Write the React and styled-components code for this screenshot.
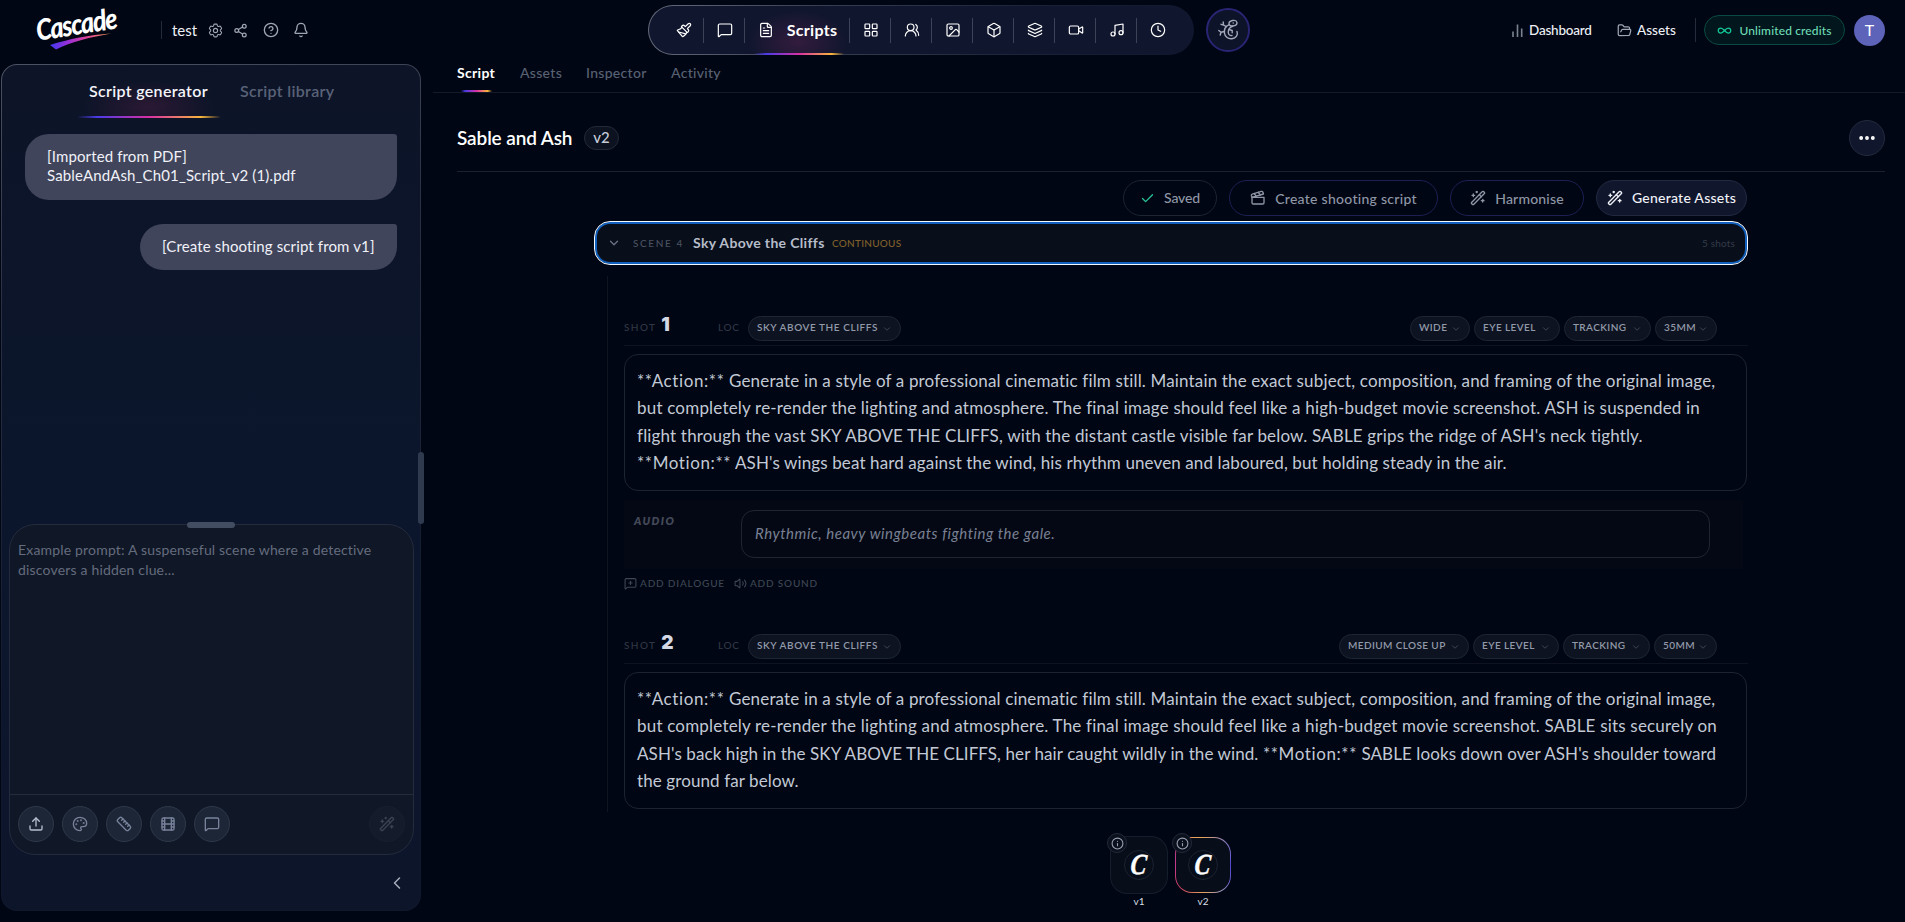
import styled, { createGlobalStyle, css } from "styled-components"
import {
	Bell, Box, Check, ChevronDown, ChevronLeft, CircleHelp, Clapperboard, Clock, Ellipsis, FileText, Film, FolderOpen,
	Image, Infinity as InfinityIcon, Info, Layers, LayoutGrid, MessageSquare, MessageSquarePlus, Music, Paintbrush,
	Palette, Ruler, Share2, Upload, UsersRound, Video, Volume2, WandSparkles
} from "lucide-react"
import { HiOutlineCog6Tooth } from "react-icons/hi2"

const GlobalStyle = createGlobalStyle`
	* { box-sizing: border-box; }
	body {
		margin: 0;
		background: #000613;
		color: #e8ebf4;
		font-family: Lato, "Open Sans", sans-serif;
		overflow: hidden;
	}
	svg { flex-shrink: 0; display: block; }
`

const rainbow = "linear-gradient(90deg, transparent, #4b3be8 14%, #d92fa5 50%, #f9b53c 86%, transparent)"

const Screen = styled.div`
	height: 922px;
	display: flex;
	flex-direction: column;
`

/* ---------- header ---------- */

const Header = styled.header`
	display: flex;
	align-items: center;
	height: 60px;
	margin-bottom: 4px;
`

const HeaderLeft = styled.div`
	display: flex;
	align-items: center;
	width: 648px;
	padding-left: 35px;
`

const Logo = styled.div`
	position: relative;
	width: 126px;
	height: 46px;
`

const LogoText = styled.div`
	width: 100px;
	font-size: 29px;
	line-height: 34px;
	font-weight: 900;
	font-style: italic;
	color: #fff;
	letter-spacing: -1.4px;
	transform-origin: left center;
	transform: translate(1px, 6px) rotate(-9deg) scaleX(.87);
`

const Swoosh = styled.svg`
	position: absolute;
	left: 14px;
	top: 25px;
`

const HeaderRule = styled.div`
	width: 1px;
	height: ${p => p.$h}px;
	background: #252b3b;
`

const ProjectName = styled.div`
	width: 35px;
	margin-left: 10px;
	padding-bottom: 1px;
	font-size: 15px;
	line-height: 20px;
	color: #eef0f6;
`

const HeaderIcons = styled.div`
	display: grid;
	grid-template-columns: 26px 30px 30px 16px;
	align-items: center;
	color: #a0a6b6;
`

const Nav = styled.nav`
	display: flex;
	align-items: center;
	width: 546px;
	height: 50px;
	padding-left: 14px;
	border: 1px solid transparent;
	border-radius: 25px;
	background:
		linear-gradient(#10162e, #10162e) padding-box,
		linear-gradient(100deg, #686d7d 0%, #3a4052 30%, #1b2139 70%, #10162e 100%) border-box;
`

const NavItem = styled.div`
	display: flex;
	align-items: center;
	justify-content: center;
	gap: 13px;
	position: relative;
	width: ${p => (p.$active ? 105 : 41)}px;
	height: 48px;
	color: #fff;
	font-size: 16px;
	font-weight: 700;
	letter-spacing: .3px;

	& span { padding-bottom: 2px; }

	&:not(:last-child)::before {
		content: "";
		position: absolute;
		right: 0;
		top: 12px;
		width: 1px;
		height: 25px;
		background: #3c4258;
	}

	${p => p.$active && css`
		background: radial-gradient(ellipse 50px 32px at 50% 75%, rgba(190, 50, 120, .2), transparent);
		&::after {
			content: "";
			position: absolute;
			left: 9px;
			right: 6px;
			bottom: -1px;
			height: 2px;
			background: ${rainbow};
		}
	`}
`

const MascotButton = styled.div`
	display: flex;
	align-items: center;
	justify-content: center;
	width: 44px;
	height: 44px;
	margin-left: 12px;
	border: 2px solid #2a2474;
	border-radius: 50%;
	background: #0d1328;
`

const HeaderRight = styled.div`
	display: flex;
	align-items: center;
	margin-left: auto;
	padding-right: 20px;
`

const HeaderLink = styled.div`
	display: flex;
	align-items: center;
	gap: ${p => p.$gap}px;
	width: ${p => p.$w}px;
	font-size: 13.5px;
	font-weight: 500;
	letter-spacing: ${p => p.$ls}px;
	color: #eef0f6;
	white-space: nowrap;
	& svg { color: #a0a6b6; }
`

const Credits = styled.div`
	display: flex;
	align-items: center;
	justify-content: center;
	gap: 7px;
	width: 141px;
	height: 30px;
	margin: 0 9px 0 8px;
	border: 1px solid #0b4a43;
	border-radius: 15px;
	background: #01161d;
	color: #6fdcb4;
	font-size: 12px;
	font-weight: 500;
	letter-spacing: .13px;
	& svg { color: #14c896; }
`

const Avatar = styled.div`
	width: 31px;
	height: 31px;
	border-radius: 50%;
	background: #5c63b8;
	font-size: 16px;
	line-height: 30px;
	text-align: center;
	color: #fff;
`

/* ---------- left panel ---------- */

const Body = styled.div`
	display: flex;
	flex: 1;
	min-height: 0;
`

const Sidebar = styled.aside`
	position: relative;
	display: flex;
	flex-direction: column;
	width: 420px;
	height: 847px;
	margin: 0 12px 0 1px;
	border: 1px solid transparent;
	border-radius: 16px;
	background:
		linear-gradient(#0d1428, #0b162c 50%, #0d152b) padding-box,
		linear-gradient(165deg, #4d5362 0%, #2b3142 25%, #10182c 70%) border-box;
`

const SideTabs = styled.div`
	display: flex;
	height: 69px;
	padding-left: 76px;
`

const SideTab = styled.div`
	width: 142px;
	height: 53px;
	padding: 14px 0 0 ${p => (p.$active ? 11 : 20)}px;
	border-bottom: 2px solid;
	border-image: ${p => (p.$active ? rainbow : "none")} 1;
	border-color: transparent;
	background: ${p => (p.$active ? "radial-gradient(ellipse 66px 26px at 50% 82%, rgba(150, 40, 90, .22), transparent)" : "none")};
	color: ${p => (p.$active ? "#f4f5fa" : "#596277")};
	font-size: 16px;
	line-height: 23px;
	font-weight: 600;
	letter-spacing: .32px;
	white-space: nowrap;
`

const Bubble = styled.div`
	align-self: flex-end;
	width: ${p => p.$w}px;
	margin: 0 23px 24px 0;
	padding: 13px 0 14px 22px;
	border-radius: 24px 3px 24px 24px;
	background: #40455b;
	color: #f0f1f8;
	font-size: 15px;
	line-height: 19.3px;
	letter-spacing: .13px;
	white-space: nowrap;
`

const PromptBox = styled.div`
	position: relative;
	display: flex;
	flex-direction: column;
	height: 331px;
	margin: auto 6px 55px 7px;
	border: 1px solid #232b3d;
	border-radius: 26px;
	background: #101726;
`

const ResizeHandle = styled.div`
	position: absolute;
	left: 177px;
	top: -3px;
	width: 48px;
	height: 6px;
	border-radius: 3px;
	background: #434d61;
`

const Placeholder = styled.div`
	flex: 1;
	padding: 15px 8px;
	color: #646c7e;
	font-size: 14px;
	line-height: 20px;
	letter-spacing: .18px;
`

const PromptTools = styled.div`
	display: flex;
	gap: 8px;
	height: 60px;
	padding: 11px 8px 0;
	border-top: 1px solid #252c3c;
`

const RoundTool = styled.div`
	display: flex;
	align-items: center;
	justify-content: center;
	width: 36px;
	height: 36px;
	border: 1px solid ${p => (p.$dim ? "#17202f" : "#2e3848")};
	border-radius: 50%;
	background: ${p => (p.$dim ? "#141c2b" : "#1c2637")};
	color: ${p => (p.$dim ? "#3b4353" : p.$bright ? "#b8bfce" : "#78829a")};
	margin-left: ${p => (p.$dim ? "auto" : 0)};
`

const Collapse = styled.div`
	position: absolute;
	right: 13px;
	bottom: 17px;
	color: #a7adbb;
`

const ScrollThumb = styled.div`
	position: absolute;
	right: -4px;
	top: 387px;
	width: 6px;
	height: 72px;
	border-radius: 3px;
	background: #2f3a4e;
`

/* ---------- main ---------- */

const Main = styled.main`
	flex: 1;
	min-width: 0;
`

const Tabs = styled.div`
	display: flex;
	height: 29px;
	padding-left: 24px;
	border-bottom: 1px solid #141a27;
`

const Tab = styled.div`
	position: relative;
	width: ${p => p.$w}px;
	font-size: 14px;
	line-height: 18px;
	font-weight: ${p => (p.$active ? 700 : 500)};
	letter-spacing: .3px;
	color: ${p => (p.$active ? "#fff" : "#596174")};

	${p => p.$active && css`
		&::after {
			content: "";
			position: absolute;
			left: 4px;
			top: 26px;
			width: 31px;
			height: 2px;
			background: ${rainbow};
		}
	`}
`

const TitleRow = styled.div`
	display: flex;
	align-items: center;
	height: 79px;
	margin: 0 20px 0 24px;
	padding-top: 12px;
	border-bottom: 1px solid #1b212d;
`

const Title = styled.div`
	width: 127px;
	padding-bottom: 2px;
	color: #fff;
	font-size: 19px;
	font-weight: 600;
	letter-spacing: -.12px;
	white-space: nowrap;
`

const VersionPill = styled.div`
	width: 35px;
	height: 24px;
	border: 1px solid #232938;
	border-radius: 12px;
	background: #0c1220;
	color: #c7ccd9;
	font-size: 15px;
	font-weight: 500;
	line-height: 21px;
	text-align: center;
`

const MoreButton = styled.div`
	display: flex;
	align-items: center;
	justify-content: center;
	width: 36px;
	height: 36px;
	margin-left: auto;
	border: 1px solid #242b3f;
	border-radius: 50%;
	background: #10162b;
	color: #fff;
`

const Column = styled.div`
	width: 1154px;
	margin-left: 161px;
`

const Actions = styled.div`
	display: flex;
	justify-content: flex-end;
	gap: 12px;
	height: 49px;
	padding: 8px 1px 0 0;
`

const ActionButton = styled.div`
	display: flex;
	align-items: center;
	justify-content: center;
	gap: 9px;
	width: ${p => p.$w}px;
	height: 36px;
	border: 1px solid ${p => p.$border};
	border-radius: 18px;
	background: ${p => (p.$solid ? "#10172d" : "transparent")};
	color: ${p => (p.$solid ? "#f0f2f8" : "#8f96a6")};
	font-size: 14px;
	font-weight: 500;
	letter-spacing: ${p => p.$ls}px;
	white-space: nowrap;
	& span { padding-bottom: ${p => p.$lift || 0}px; }
`

const SceneRow = styled.div`
	display: flex;
	align-items: center;
	height: 44px;
	padding: 0 11px 1px 12px;
	border: 1px solid #f4f8ff;
	border-radius: 16px;
	background: #080e1a;
	box-shadow: inset 0 0 0 2px #1160bd;
	white-space: nowrap;
	color: #697080;
`

const SceneNo = styled.div`
	width: 60px;
	margin-left: 12px;
	padding-top: 1px;
	font-size: 10px;
	font-weight: 500;
	letter-spacing: 1.6px;
	color: #4a5160;
`

const SceneTitle = styled.div`
	width: 139px;
	padding-bottom: 1px;
	font-size: 14px;
	font-weight: 700;
	letter-spacing: .33px;
	color: #b6bcc9;
`

const SceneTime = styled.div`
	padding-top: 1px;
	font-size: 10px;
	font-weight: 500;
	letter-spacing: .25px;
	color: #80602a;
`

const ShotCount = styled.div`
	margin: 0 1px 0 auto;
	font-size: 10px;
	letter-spacing: .17px;
	color: #343b49;
`

const ShotList = styled.div`
	height: 536px;
	margin: 11px 0 0 13px;
	padding-left: 16px;
	border-left: 1px solid #0e1420;
	overflow: hidden;
`

const Shot = styled.section`
	height: 318px;
	padding-top: 40px;
`

const ShotHeader = styled.div`
	display: grid;
	grid-template-columns: 94px 30px 1fr auto;
	height: 30px;
	padding-right: 31px;
	border-bottom: 1px solid #0e131f;
`

const ShotLabel = styled.div`
	display: flex;
	align-items: baseline;
	height: 24px;
	font-size: 10px;
	line-height: 23px;
	font-weight: 500;
	letter-spacing: ${p => p.$ls}px;
	color: #303746;
`

const ShotNumber = styled.b`
	margin-left: 5px;
	font-family: Inter, sans-serif;
	font-size: 19px;
	font-weight: 900;
	line-height: 14px;
	color: #d3d8e4;
`

const Pills = styled.div`
	display: flex;
	gap: 4px;
`

const Pill = styled.div`
	display: flex;
	align-items: center;
	justify-content: space-between;
	width: ${p => p.$w}px;
	height: 25px;
	padding: 0 8px 3px;
	border: 1px solid #1e2533;
	border-radius: 13px;
	background: #0d1320;
	color: #9299a9;
	font-size: 10px;
	font-weight: 600;
	letter-spacing: ${p => (p.$wide ? ".57px" : ".4px")};
	white-space: nowrap;
	& svg { color: #475061; margin-top: 4px; }
`

const ScriptBox = styled.div`
	height: 137px;
	margin: 8px 1px 0 0;
	padding: 11.5px 12px 0;
	border: 1px solid #1d2431;
	border-radius: 14px;
	color: #c3c9d5;
	font-size: 17px;
	line-height: 27.5px;
	white-space: nowrap;
`

const Line = styled.div`
	letter-spacing: ${p => p.$ls}px;
`

const Marker = styled.span`
	letter-spacing: .6px;
`

const Audio = styled.div`
	display: flex;
	height: 69px;
	margin: 9px 5px 0 0;
	padding: 10px 33px 0 10px;
	background: #040814;
`

const AudioLabel = styled.div`
	width: 107px;
	padding-top: 4px;
	font-size: 11px;
	font-weight: 800;
	font-style: italic;
	letter-spacing: 1.4px;
	color: #434958;
`

const AudioInput = styled.div`
	flex: 1;
	height: 48px;
	padding-left: 13px;
	border: 1px solid #1f2533;
	border-radius: 13px;
	color: #798093;
	font-size: 15px;
	font-style: italic;
	line-height: 44px;
	letter-spacing: .54px;
`

const AddRow = styled.div`
	display: flex;
	gap: 9px;
	margin-top: 7px;
`

const AddLink = styled.div`
	display: flex;
	align-items: center;
	gap: 3px;
	height: 14px;
	font-size: 10px;
	font-weight: 500;
	letter-spacing: .82px;
	color: #3f4654;
`

const Versions = styled.div`
	display: flex;
	justify-content: center;
	gap: 7px;
	padding: 24px 1px 0 0;
`

const Version = styled.div`
	position: relative;
	width: ${p => (p.$active ? 56 : 58)}px;
	font-size: 10px;
	line-height: 14px;
	text-align: center;
	color: #d9dde6;
`

const quietEdge = "linear-gradient(#151c2b, #151c2b)"
const activeEdge = `conic-gradient(
	#e8a25a, #8f83c8 12%, #5143d0 25%, #6557c8 33%, #9a93b8 40%,
	#e8a25a 50%, #c8405f 62%, #c63a8c 75%, #b0417c 85%, #e8a25a 95%
)`

const VersionTile = styled.div`
	display: flex;
	align-items: center;
	justify-content: center;
	height: ${p => (p.$active ? 56 : 58)}px;
	margin: ${p => (p.$active ? "1px 0" : 0)};
	border: 1px solid transparent;
	border-radius: 17px;
	background:
		linear-gradient(#070d19, #070d19) padding-box,
		${p => (p.$active ? activeEdge : quietEdge)} border-box;
`

const Monogram = styled.div`
	width: 30px;
	height: 30px;
	border: 1px solid #1b2231;
	border-radius: 50%;
	font: italic 700 29px/27px "Liberation Serif", serif;
	color: #fff;
	text-align: center;
	& span { display: inline-block; transform: skewX(-6deg) scaleX(.82); -webkit-text-stroke: .5px #fff; }
`

const InfoBadge = styled.div`
	position: absolute;
	left: -3px;
	top: -3px;
	display: flex;
	align-items: center;
	justify-content: center;
	width: 20px;
	height: 20px;
	border: 1px solid #232a3a;
	border-radius: 50%;
	background: #0b101d;
	color: #99a1b2;
`

const Bars = () => (
	<svg width="11" height="13" viewBox="0 0 11 13" stroke="#7b8292" strokeWidth="1.6">
		<path d="M1 13V7.5M5.5 13V.5M9.7 13V4.5" />
	</svg>
)

const Lizard = () => (
	<svg width="24" height="24" viewBox="0 0 24 24" fill="none" stroke="#a4a8ba" strokeWidth="1.4" strokeLinecap="round" strokeLinejoin="round">
		<ellipse cx="17" cy="5.2" rx="4" ry="2.7" transform="rotate(-12 17 5.2)" />
		<path d="M17.2 5h.1" />
		<path d="M13.2 6.6C9.500 8.200 8 11.500 8.400 15c.5 4 4 6.200 7.600 5.700 4.200-.6 6.200-4 5-7.200" />
		<path d="M17 8c-3.200 1.200-5 3.500-4.700 6.700.2 2 1.800 3.200 3.700 2.800" />
		<path d="M10.300 8.700 7.500 7 7.200 4M7.500 7 5 6.300M8.300 13.500 5 14.300 2.800 12.500M5 14.300 4.200 17M13 11.500l3.200 1v2.300" />
	</svg>
)

const navItems = [Paintbrush, MessageSquare, FileText, LayoutGrid, UsersRound, Image, Box, Layers, Video, Music, Clock]

const shots = [
	{
		no: 1,
		tags: [["WIDE", 60], ["EYE LEVEL", 86], ["TRACKING", 87], ["35MM", 62]],
		lines: [
			["**Action:** Generate in a style of a professional cinematic film still. Maintain the exact subject, composition, and framing of the original image,", 0.155],
			["but completely re-render the lighting and atmosphere. The final image should feel like a high-budget movie screenshot. ASH is suspended in", 0.193],
			["flight through the vast SKY ABOVE THE CLIFFS, with the distant castle visible far below. SABLE grips the ridge of ASH's neck tightly.", 0.167],
			["**Motion:** ASH's wings beat hard against the wind, his rhythm uneven and laboured, but holding steady in the air.", 0.115]
		],
		audio: "Rhythmic, heavy wingbeats fighting the gale."
	},
	{
		no: 2,
		tags: [["MEDIUM CLOSE UP", 130], ["EYE LEVEL", 86], ["TRACKING", 87], ["50MM", 63]],
		lines: [
			["**Action:** Generate in a style of a professional cinematic film still. Maintain the exact subject, composition, and framing of the original image,", 0.155],
			["but completely re-render the lighting and atmosphere. The final image should feel like a high-budget movie screenshot. SABLE sits securely on", 0.19],
			["ASH's back high in the SKY ABOVE THE CLIFFS, her hair caught wildly in the wind. **Motion:** SABLE looks down over ASH's shoulder toward", 0.09],
			["the ground far below.", 0.1]
		]
	}
]

/* the **Label:** parts are set a little looser than the prose */
const withMarkers = text =>
	text.split(/(\*\*\w+:\*\*)/).map((part, i) => (part.startsWith("**") ? <Marker key={i}>{part}</Marker> : part))

const TopBar = () => (
	<Header>
		<HeaderLeft>
			<Logo>
				<LogoText>Cascade</LogoText>
				<Swoosh width="64" height="18" viewBox="0 0 64 18">
					<defs>
						<linearGradient id="swoosh">
							<stop offset="0" stopColor="#4038f0" />
							<stop offset=".3" stopColor="#9a30d8" />
							<stop offset=".6" stopColor="#e0409a" />
							<stop offset="1" stopColor="#f5a050" />
						</linearGradient>
					</defs>
					<path d="M1 13C20 7 40 3 62 1.5 42 5 22 10 7 17.5Z" fill="url(#swoosh)" />
				</Swoosh>
			</Logo>
			<HeaderRule $h={18} />
			<ProjectName>test</ProjectName>
			<HeaderIcons>
				<HiOutlineCog6Tooth size={17} />
				<Share2 size={15} />
				<CircleHelp size={16} />
				<Bell size={16} />
			</HeaderIcons>
		</HeaderLeft>
		<Nav>
			{navItems.map((Icon, i) => (
				<NavItem key={i} $active={i === 2}>
					<Icon size={16} strokeWidth={1.8} />
					{i === 2 && <span>Scripts</span>}
				</NavItem>
			))}
		</Nav>
		<MascotButton><Lizard /></MascotButton>
		<HeaderRight>
			<HeaderLink $gap={6} $w={105} $ls={-0.2}><Bars />Dashboard</HeaderLink>
			<HeaderLink $gap={5} $w={78} $ls={0}><FolderOpen size={15} />Assets</HeaderLink>
			<HeaderRule $h={24} />
			<Credits><InfinityIcon size={15} />Unlimited credits</Credits>
			<Avatar>T</Avatar>
		</HeaderRight>
	</Header>
)

const LeftPanel = () => (
	<Sidebar>
		<SideTabs>
			<SideTab $active>Script generator</SideTab>
			<SideTab>Script library</SideTab>
		</SideTabs>
		<Bubble $w={372}>[Imported from PDF]<br />SableAndAsh_Ch01_Script_v2 (1).pdf</Bubble>
		<Bubble $w={257}>[Create shooting script from v1]</Bubble>
		<PromptBox>
			<ResizeHandle />
			<Placeholder>Example prompt: A suspenseful scene where a detective discovers a hidden clue...</Placeholder>
			<PromptTools>
				<RoundTool $bright><Upload size={16} /></RoundTool>
				<RoundTool><Palette size={16} /></RoundTool>
				<RoundTool><Ruler size={16} /></RoundTool>
				<RoundTool><Film size={16} /></RoundTool>
				<RoundTool><MessageSquare size={16} /></RoundTool>
				<RoundTool $dim><WandSparkles size={16} /></RoundTool>
			</PromptTools>
		</PromptBox>
		<Collapse><ChevronLeft size={20} strokeWidth={1.8} /></Collapse>
		<ScrollThumb />
	</Sidebar>
)

const ShotCard = ({ shot }) => (
	<Shot>
		<ShotHeader>
			<ShotLabel $ls={1.4}>SHOT<ShotNumber>{shot.no}</ShotNumber></ShotLabel>
			<ShotLabel $ls={0.7}>LOC</ShotLabel>
			<Pills><Pill $w={153} $wide>SKY ABOVE THE CLIFFS<ChevronDown size={10} /></Pill></Pills>
			<Pills>
				{shot.tags.map(([label, w]) => <Pill key={label} $w={w}>{label}<ChevronDown size={10} /></Pill>)}
			</Pills>
		</ShotHeader>
		<ScriptBox>
			{shot.lines.map(([text, ls]) => <Line key={text} $ls={ls}>{withMarkers(text)}</Line>)}
		</ScriptBox>
		{shot.audio && (
			<>
				<Audio>
					<AudioLabel>AUDIO</AudioLabel>
					<AudioInput>{shot.audio}</AudioInput>
				</Audio>
				<AddRow>
					<AddLink><MessageSquarePlus size={13} />ADD DIALOGUE</AddLink>
					<AddLink><Volume2 size={13} />ADD SOUND</AddLink>
				</AddRow>
			</>
		)}
	</Shot>
)

const App = () => (
	<Screen>
		<GlobalStyle />
		<TopBar />
		<Body>
			<LeftPanel />
			<Main>
				<Tabs>
					<Tab $w={63} $active>Script</Tab>
					<Tab $w={66}>Assets</Tab>
					<Tab $w={85}>Inspector</Tab>
					<Tab $w={60}>Activity</Tab>
				</Tabs>
				<TitleRow>
					<Title>Sable and Ash</Title>
					<VersionPill>v2</VersionPill>
					<MoreButton><Ellipsis size={20} strokeWidth={2.6} /></MoreButton>
				</TitleRow>
				<Column>
					<Actions>
						<ActionButton $w={94} $border="#1d2532" $ls={-0.15} $lift={2}><Check size={15} color="#2bc79a" /><span>Saved</span></ActionButton>
						<ActionButton $w={209} $border="#1e2054" $ls={0.28}><Clapperboard size={16} /><span>Create shooting script</span></ActionButton>
						<ActionButton $w={134} $border="#1e2054" $ls={0.18}><WandSparkles size={16} /><span>Harmonise</span></ActionButton>
						<ActionButton $w={151} $border="#222941" $ls={0.25} $lift={2} $solid><WandSparkles size={16} /><span>Generate Assets</span></ActionButton>
					</Actions>
					<SceneRow>
						<ChevronDown size={14} strokeWidth={2.4} />
						<SceneNo>SCENE 4</SceneNo>
						<SceneTitle>Sky Above the Cliffs</SceneTitle>
						<SceneTime>CONTINUOUS</SceneTime>
						<ShotCount>5 shots</ShotCount>
					</SceneRow>
					<ShotList>
						{shots.map(shot => <ShotCard key={shot.no} shot={shot} />)}
					</ShotList>
					<Versions>
						<Version>
							<VersionTile><Monogram><span>C</span></Monogram></VersionTile>
							<InfoBadge><Info size={13} /></InfoBadge>
							v1
						</Version>
						<Version $active>
							<VersionTile $active><Monogram><span>C</span></Monogram></VersionTile>
							<InfoBadge><Info size={13} /></InfoBadge>
							v2
						</Version>
					</Versions>
				</Column>
			</Main>
		</Body>
	</Screen>
)

export default App
